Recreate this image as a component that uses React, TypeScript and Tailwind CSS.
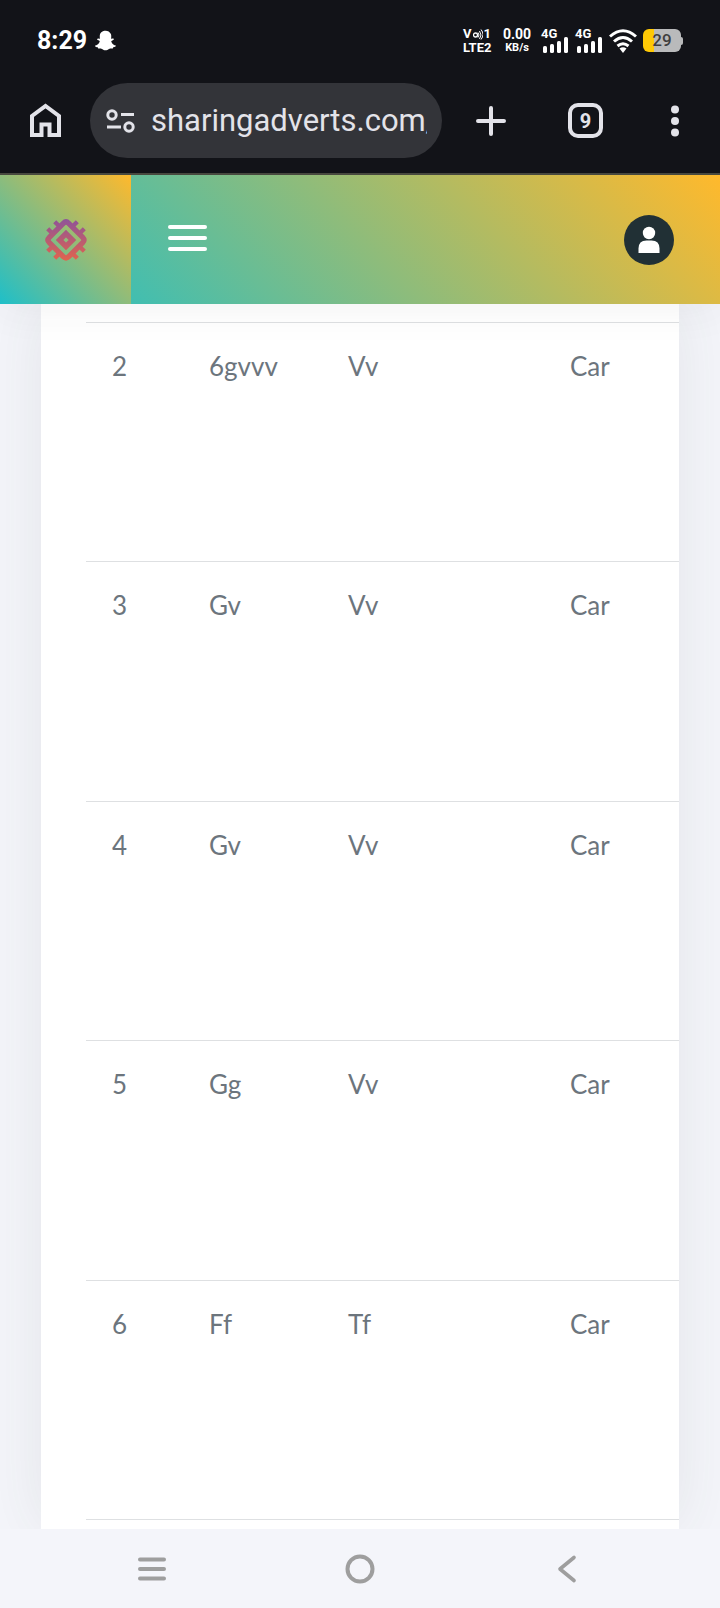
import { FaSnapchatGhost } from 'react-icons/fa'

type Entry = { id: number; title: string; detail: string; category: string }

const entries: Entry[] = [
  { id: 2, title: '6gvvv', detail: 'Vv', category: 'Car' },
  { id: 3, title: 'Gv', detail: 'Vv', category: 'Car' },
  { id: 4, title: 'Gv', detail: 'Vv', category: 'Car' },
  { id: 5, title: 'Gg', detail: 'Vv', category: 'Car' },
  { id: 6, title: 'Ff', detail: 'Tf', category: 'Car' },
]

function Signal() {
  return (
    <div className="relative h-6 w-7">
      <span className="absolute top-0 left-0 text-[13px] leading-[10px] font-bold">4G</span>
      <svg className="h-6 w-7" viewBox="0 0 28 24" fill="currentColor" aria-hidden="true">
        <rect x="2" y="17" width="4" height="7" rx="1.6" />
        <rect x="9" y="15" width="4" height="9" rx="1.6" />
        <rect x="16" y="12" width="4" height="12" rx="1.6" />
        <rect x="23" y="8" width="4" height="16" rx="1.6" />
      </svg>
    </div>
  )
}

function StatusBar() {
  return (
    <div className="flex h-[81px] items-center pr-[37px] pl-[37px] text-white">
      <span className="text-[25px] font-bold">8:29</span>
      <FaSnapchatGhost className="ml-2 size-[21px]" />
      <div className="ml-auto flex items-center">
        <div className="w-[30px] text-[13px] leading-[14px] font-bold">
          <div className="flex items-center justify-between pr-0.5">
            V
            <svg className="h-3 w-2.5" viewBox="0 0 10 12" fill="none" stroke="currentColor" aria-hidden="true">
              <circle cx="2.5" cy="7" r="2" strokeWidth="1.3" />
              <path d="M5 4.5q2 2.500 0 5M6.500 3q3 4 0 8M8 1.500q4 5 0 10" strokeWidth="1" />
            </svg>
            1
          </div>
          <div>LTE2</div>
        </div>
        <div className="ml-[9px] w-[30px] text-center font-bold">
          <div className="text-sm leading-[14px]">0.00</div>
          <div className="text-[11px] leading-[13px]">KB/s</div>
        </div>
        <div className="ml-[9px] flex gap-1.5">
          <Signal />
          <Signal />
        </div>
        <svg className="ml-1.5 h-6 w-7" viewBox="0 0 28 24" fill="none" stroke="currentColor" strokeWidth="3" aria-hidden="true">
          <path d="M1 7.500q13-11.500 26 0M5 12.500q9-8 18 0M8.500 17q5.500-4.500 11 0" />
          <path d="M14 24l-3.500-4.500q3.500-2.500 7 0z" fill="currentColor" stroke="none" />
        </svg>
        <div className="ml-1.5 flex items-center">
          <div className="flex h-[23px] w-[38px] items-center justify-center rounded-md bg-[linear-gradient(to_right,#ffc905_11px,#b9babb_11px)] text-[17px] font-medium text-[#3f3f3f]">
            29
          </div>
          <div className="h-2 w-0.5 rounded-r bg-[#b9babb]" />
        </div>
      </div>
    </div>
  )
}

function BrowserBar() {
  return (
    <div className="flex h-[94px] items-start border-b-2 border-[#48493f] pt-0.5 pr-[41px] pl-[30px] text-[#e3e3e9]">
      <button aria-label="Home" className="flex h-[75px] items-center">
        <svg className="h-[35px] w-[31px]" viewBox="0 0 31 35" fill="none" stroke="currentColor" strokeWidth="4" aria-hidden="true">
          <path d="M2 32V13L15.500 3L29 13V32H19.500V21.500H11.500V32Z" />
        </svg>
      </button>
      <div className="ml-[29px] flex h-[75px] min-w-0 flex-1 items-center rounded-full bg-[#333439] pr-[15px] pl-4">
        <svg className="h-6 w-[29px] shrink-0" viewBox="0 0 29 24" fill="none" stroke="currentColor" strokeWidth="3" aria-hidden="true">
          <circle cx="6" cy="6" r="4.200" />
          <path d="M15 5.500h13M1 18h14" />
          <circle cx="23" cy="18" r="4.200" />
        </svg>
        <input
          aria-label="Address"
          readOnly
          value="sharingadverts.com/"
          className="ml-4 h-12 w-full min-w-0 bg-transparent text-[31px] outline-none"
        />
      </div>
      <button aria-label="New tab" className="ml-[34px] flex h-[75px] items-center">
        <svg className="size-[30px]" viewBox="0 0 30 30" fill="none" stroke="currentColor" strokeWidth="4" strokeLinecap="round" aria-hidden="true">
          <path d="M15 2v26M2 15h26" />
        </svg>
      </button>
      <button aria-label="Switch tabs" className="ml-[62px] flex h-[75px] items-center">
        <span className="flex size-[35px] items-center justify-center rounded-[10px] border-4 border-current text-xl font-bold">9</span>
      </button>
      <button aria-label="Menu" className="ml-[68px] flex h-[75px] items-center">
        <svg className="h-8 w-2" viewBox="0 0 8 32" fill="currentColor" aria-hidden="true">
          <circle cx="4" cy="4.500" r="4" />
          <circle cx="4" cy="16" r="4" />
          <circle cx="4" cy="27.500" r="4" />
        </svg>
      </button>
    </div>
  )
}

function SiteHeader() {
  return (
    <header className="relative z-10 flex h-[129px] items-center bg-linear-45/srgb from-[#1ebfc9] to-[#ffb92c] shadow-[0_0_45px_rgba(60,70,70,0.08)]">
      <a href="#" aria-label="Dashboard" className="flex h-full w-[131px] items-center justify-center bg-linear-45/srgb from-[#1ebfc9] to-[#ffb92c]">
        <svg className="size-[42px]" viewBox="1.5 1.5 39 39" fill="none" aria-hidden="true">
          <defs>
            <linearGradient id="brand" gradientUnits="userSpaceOnUse" x1="21" y1="0" x2="21" y2="42">
              <stop offset="0" stopColor="#8b529c" />
              <stop offset="1" stopColor="#e5654a" />
            </linearGradient>
          </defs>
          <g stroke="url(#brand)">
            <path d="M18.500 5.500Q21 3 23.500 5.500L36.500 18.500Q39 21 36.500 23.500L23.500 36.500Q21 39 18.500 36.500L5.500 23.500Q3 21 5.500 18.500Z" strokeWidth="5" />
            <path d="M10.500 4L15 8.500M4 10.500L8.500 15M31.500 4L27 8.500M38 10.500L33.500 15M10.500 38L15 33.500M4 31.500L8.500 27M31.500 38L27 33.500M38 31.500L33.500 27" strokeWidth="4" />
            <path d="M21 15L27 21L21 27L15 21Z" strokeWidth="5" />
          </g>
        </svg>
      </a>
      <button aria-label="Toggle menu" className="mb-1 ml-[37px] flex w-[39px] flex-col gap-[7px]">
        <span className="h-1 rounded-full bg-white" />
        <span className="h-1 rounded-full bg-white" />
        <span className="h-1 rounded-full bg-white" />
      </button>
      <button aria-label="Account" className="mr-[46px] ml-auto">
        <svg className="size-[50px]" viewBox="0 0 50 50" aria-hidden="true">
          <circle cx="25" cy="25" r="25" fill="#213035" />
          <circle cx="25" cy="18" r="6.200" fill="#fff" />
          <path d="M14.500 38v-4.500q0-8 8-8h5q8 0 8 8V38z" fill="#fff" />
        </svg>
      </button>
    </header>
  )
}

function NavBar() {
  return (
    <nav className="relative z-10 flex h-[79px] items-center justify-between bg-[#f4f5fa] px-[137px] text-[#9e9e9e]">
      <button aria-label="Recent apps">
        <svg className="size-[30px]" viewBox="0 0 30 30" fill="none" stroke="currentColor" strokeWidth="4" strokeLinecap="round" aria-hidden="true">
          <path d="M3 5.500h24M3 15h24M3 24.500h24" />
        </svg>
      </button>
      <button aria-label="Home screen">
        <svg className="size-[30px]" viewBox="0 0 30 30" fill="none" stroke="currentColor" strokeWidth="4" aria-hidden="true">
          <circle cx="15" cy="15" r="12.500" />
        </svg>
      </button>
      <button aria-label="Back">
        <svg className="size-[30px]" viewBox="0 0 30 30" fill="none" stroke="currentColor" strokeWidth="3.600" strokeLinecap="round" strokeLinejoin="round" aria-hidden="true">
          <path d="M21 3.500L7 15L21 26.500" />
        </svg>
      </button>
    </nav>
  )
}

export default function App() {
  return (
    <div className="flex min-h-screen flex-col bg-[#f4f5fa] font-['Roboto',sans-serif]">
      <div className="relative z-20 bg-[#121318]">
        <StatusBar />
        <BrowserBar />
      </div>
      <SiteHeader />
      <main className="flex flex-1 flex-col overflow-hidden px-[41px]">
        <div className="flex-1 bg-white pt-[18px] pb-[9px] pl-[45px] shadow-[0_0_60px_rgba(60,65,60,0.09)]">
          <table className="w-full table-fixed border-b border-[#dee0e2] text-left font-['Lato',sans-serif] text-[26px] leading-9 text-[#6c757d]">
            <colgroup>
              <col className="w-[97px]" />
              <col className="w-[139px]" />
              <col className="w-[222px]" />
              <col />
            </colgroup>
            <tbody>
              {entries.map((entry) => (
                <tr key={entry.id} className="h-[239px] border-t border-[#dee0e2] align-top even:h-[240px]">
                  <td className="pt-[25px] pl-[26px]">{entry.id}</td>
                  <td className="pt-[25px] pl-[26px]">{entry.title}</td>
                  <td className="pt-[25px] pl-[26px]">{entry.detail}</td>
                  <td className="pt-[25px] pl-[26px]">{entry.category}</td>
                </tr>
              ))}
            </tbody>
          </table>
        </div>
      </main>
      <NavBar />
    </div>
  )
}
